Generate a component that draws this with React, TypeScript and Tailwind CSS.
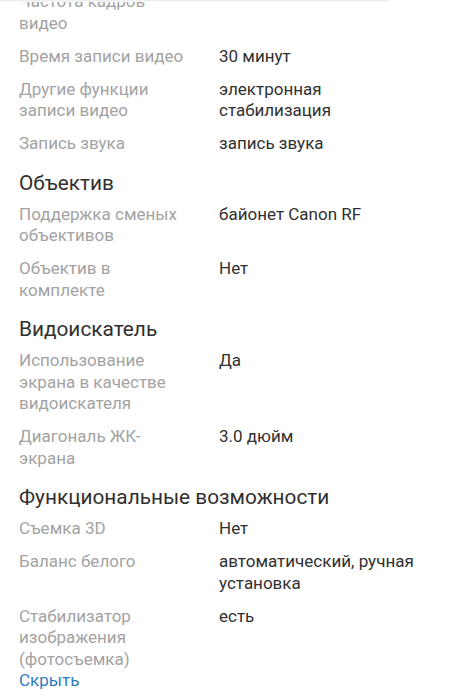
import React from "react";

type Row = { label: string; value?: string };
type Section = { title?: string; rows: Row[] };

const SECTIONS: Section[] = [
  {
    rows: [
      { label: "Частота кадров видео" },
      { label: "Время записи видео", value: "30 минут" },
      { label: "Другие функции записи видео", value: "электронная стабилизация" },
      { label: "Запись звука", value: "запись звука" },
    ],
  },
  {
    title: "Объектив",
    rows: [
      { label: "Поддержка сменых объективов", value: "байонет Canon RF" },
      { label: "Объектив в комплекте", value: "Нет" },
    ],
  },
  {
    title: "Видоискатель",
    rows: [
      { label: "Использование экрана в качестве видоискателя", value: "Да" },
      { label: "Диагональ ЖК-экрана", value: "3.0 дюйм" },
    ],
  },
  {
    title: "Функциональные возможности",
    rows: [
      { label: "Съемка 3D", value: "Нет" },
      { label: "Баланс белого", value: "автоматический, ручная установка" },
      { label: "Стабилизатор изображения (фотосъемка)", value: "есть" },
    ],
  },
];

const SpecRow = ({ row }: { row: Row }) => (
  <div className="flex text-[17px] leading-[21.5px]">
    <div className="w-[200px] shrink-0 pr-[30px] text-[#a3a3a3]">{row.label}</div>
    <div className="w-[200px] text-[#303030]">{row.value}</div>
  </div>
);

export default function App() {
  return (
    <div
      className="relative h-[699px] overflow-hidden bg-white"
      style={{ fontFamily: "Roboto, 'Noto Sans', sans-serif" }}
    >
      <div className="absolute left-0 top-0 h-[2px] w-[390px] bg-gradient-to-b from-[#e8e8e8] to-white" />
      <div className="mt-[-9px] flex flex-col px-[19px]">
        {SECTIONS.map((s, i) => (
          <div key={i} className="flex flex-col">
            {s.title && (
              <h2 className="mt-[15px] mb-[8px] text-[20.8px] leading-[26px] text-[#303030]">
                {s.title}
              </h2>
            )}
            <div className="flex flex-col gap-[11.5px]">
              {s.rows.map((r) => (
                <SpecRow key={r.label} row={r} />
              ))}
            </div>
          </div>
        ))}
        <a href="#" className="text-[17px] leading-[21.5px] text-[#2f7bbf]">
          Скрыть
        </a>
      </div>
    </div>
  );
}
